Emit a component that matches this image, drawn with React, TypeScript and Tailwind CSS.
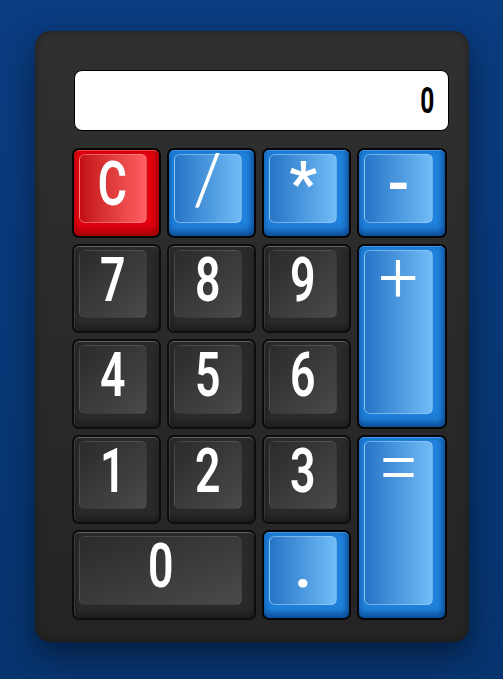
import React from "react";

type Variant = "gray" | "blue" | "red";

const outerCls: Record<Variant, string> = {
  gray: "bg-[#2a2a2a] border-2 border-[#0c0c0c] shadow-[inset_0_1px_0_#616161,inset_1px_0_0_#3a3a3a,inset_0_-4px_6px_rgba(0,0,0,0.35)]",
  blue: "bg-[#1f82dc] border-2 border-[#050505] shadow-[inset_0_1px_0_#3d9bef,inset_0_-5px_7px_rgba(0,45,110,0.55),inset_-3px_0_5px_rgba(0,45,110,0.35)]",
  red: "bg-[#e3000e] border-2 border-[#050505] shadow-[inset_0_1px_0_#ff3a3a,inset_0_-5px_7px_rgba(110,0,0,0.55),inset_-3px_0_5px_rgba(110,0,0,0.35)]",
};

const faceCls: Record<Variant, string> = {
  gray: "bg-linear-to-br from-[#2b2b2b] to-[#4a4a4a] border border-white/5",
  blue: "bg-linear-to-r from-[#2574c6] to-[#71bcf6] border border-[#9fd2fa]/60",
  red: "bg-linear-to-r from-[#c20b13] to-[#ff5e62] border border-[#ffa0a0]/50",
};

const DIGIT = "mt-[-2px] text-[62px] font-semibold scale-x-[0.72]";

function Key({
  label,
  variant,
  className = "",
  labelClass = DIGIT,
}: {
  label: string;
  variant: Variant;
  className?: string;
  labelClass?: string;
}) {
  return (
    <div
      className={`flex rounded-[7px] pt-[4px] pl-[5px] pr-[12px] pb-[13px] ${outerCls[variant]} ${className}`}
    >
      <div className={`flex-1 flex justify-center rounded-[6px] ${faceCls[variant]}`}>
        <span
          className={`block h-0 overflow-visible text-white leading-none font-['Roboto','Liberation_Sans',sans-serif] ${labelClass}`}
        >
          {label}
        </span>
      </div>
    </div>
  );
}

export default function App() {
  return (
    <div className="min-h-screen w-full bg-linear-to-b from-[#0a3c80] to-[#07346f] pt-[31px]">
      <div className="mx-auto w-[434px] rounded-[15px] bg-linear-to-b from-[#303030] to-[#242424] pt-[39px] pl-[37px] pr-[22px] pb-[22px] shadow-[0_12px_30px_rgba(0,0,0,0.45),inset_0_0_8px_rgba(0,0,0,0.35)]">
        <div className="ml-[2px] mr-[-2px] h-[61px] rounded-[8px] border border-black bg-white flex items-center justify-end pr-[10px]">
          <span className="block text-black text-[36px] leading-none font-bold font-['Roboto','Liberation_Sans',sans-serif] scale-x-[0.68]">
            0
          </span>
        </div>
        <div className="mt-[17px] grid grid-cols-4 grid-rows-[repeat(5,89.6px)] gap-[6px]">
          <Key label="C" variant="red" />
          <Key label="/" variant="blue" labelClass="mt-[-11px] text-[70px] font-light" />
          <Key label="*" variant="blue" labelClass="mt-[-2px] text-[62px] font-semibold" />
          <Key label="-" variant="blue" labelClass="mt-[-2px] text-[62px] font-semibold" />
          <Key label="7" variant="gray" />
          <Key label="8" variant="gray" />
          <Key label="9" variant="gray" />
          <Key label="+" variant="blue" className="row-span-2" labelClass="mt-[-8px] text-[70px] font-light" />
          <Key label="4" variant="gray" />
          <Key label="5" variant="gray" />
          <Key label="6" variant="gray" />
          <Key label="1" variant="gray" />
          <Key label="2" variant="gray" />
          <Key label="3" variant="gray" />
          <Key label="=" variant="blue" className="row-span-2" labelClass="mt-[-12px] text-[74px] font-light" />
          <Key label="0" variant="gray" className="col-span-2" />
          <Key label="." variant="blue" labelClass="mt-[-2px] text-[62px] font-semibold" />
        </div>
      </div>
    </div>
  );
}
